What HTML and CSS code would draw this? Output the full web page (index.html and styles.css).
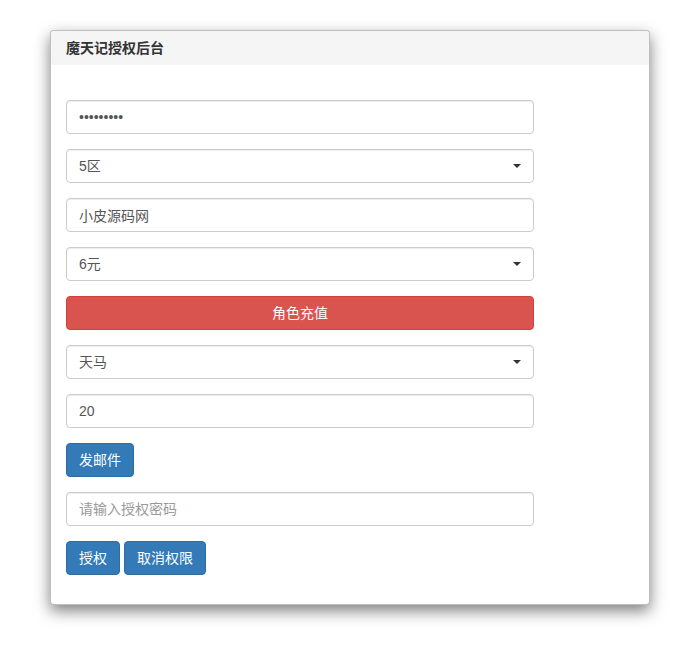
FILE: index.html
```html
<!DOCTYPE html>
<html lang="zh-CN">
<head>
    <meta charset="UTF-8">
    <meta name="viewport" content="width=device-width, initial-scale=1.0">
    <title>魔天记授权后台</title>
    <link rel="stylesheet" href="styles.css">
</head>
<body>
    <div class="panel">
        <div class="panel-heading">魔天记授权后台</div>
        <div class="panel-body">
            <form class="form">
                <input type="password" class="form-control" value="123456789">
                <div class="select-wrap">
                    <select class="form-control">
                        <option>5区</option>
                    </select>
                </div>
                <input type="text" class="form-control" value="小皮源码网">
                <div class="select-wrap">
                    <select class="form-control">
                        <option>6元</option>
                    </select>
                </div>
                <button type="button" class="btn btn-danger btn-block">角色充值</button>
                <div class="select-wrap">
                    <select class="form-control">
                        <option>天马</option>
                    </select>
                </div>
                <input type="text" class="form-control" value="20">
                <div class="btn-row">
                    <button type="button" class="btn btn-primary">发邮件</button>
                </div>
                <input type="text" class="form-control" placeholder="请输入授权密码">
                <div class="btn-row">
                    <button type="button" class="btn btn-primary">授权</button>
                    <button type="button" class="btn btn-primary">取消权限</button>
                </div>
            </form>
        </div>
    </div>
</body>
</html>
```

FILE: styles.css
```css
body {
    margin: 0;
    padding: 30px 0 40px;
    background-color: #fff;
    font-family: "Liberation Sans", "Noto Sans CJK SC", sans-serif;
    font-size: 14px;
    color: #333;
}
.panel {
    width: 598px;
    margin-left: 50px;
    background-color: #fff;
    border: 1px solid rgba(0,0,0,0.25);
    border-radius: 4px;
    box-shadow: 0 6px 15px rgba(0,0,0,0.5);
}
.panel-heading {
    height: 34px;
    box-sizing: border-box;
    padding: 9px 15px;
    background-color: #f5f5f5;
    border-radius: 3px 3px 0 0;
    font-weight: bold;
    line-height: 16px;
}
.panel-body {
    padding: 15px;
}
.form {
    margin: 20px 0 14px;
    width: 468px;
    display: flex;
    flex-direction: column;
    gap: 15px;
}
.form-control {
    display: block;
    width: 100%;
    height: 34px;
    box-sizing: border-box;
    margin: 0;
    padding: 6px 12px;
    border: 1px solid #ccc;
    border-radius: 4px;
    background-color: #fff;
    font-family: inherit;
    font-size: 14px;
    color: #555;
    box-shadow: inset 0 1px 1px rgba(0,0,0,0.075);
}
.form-control::placeholder {
    color: #999;
}
select.form-control {
    appearance: none;
    -webkit-appearance: none;
}
.select-wrap {
    position: relative;
}
.select-wrap::after {
    content: "";
    position: absolute;
    right: 13px;
    top: 15px;
    border-left: 4px solid transparent;
    border-right: 4px solid transparent;
    border-top: 4px solid #333;
}
.btn {
    height: 34px;
    box-sizing: border-box;
    padding: 6px 12px;
    border: 1px solid transparent;
    border-radius: 4px;
    font-family: inherit;
    font-size: 14px;
    line-height: 20px;
    color: #fff;
    cursor: pointer;
}
.btn-block {
    width: 100%;
}
.btn-danger {
    background-color: #d9534f;
    border-color: #d43f3a;
}
.btn-primary {
    background-color: #337ab7;
    border-color: #2e6da4;
}
.btn-row {
    display: flex;
    gap: 4px;
}
```
